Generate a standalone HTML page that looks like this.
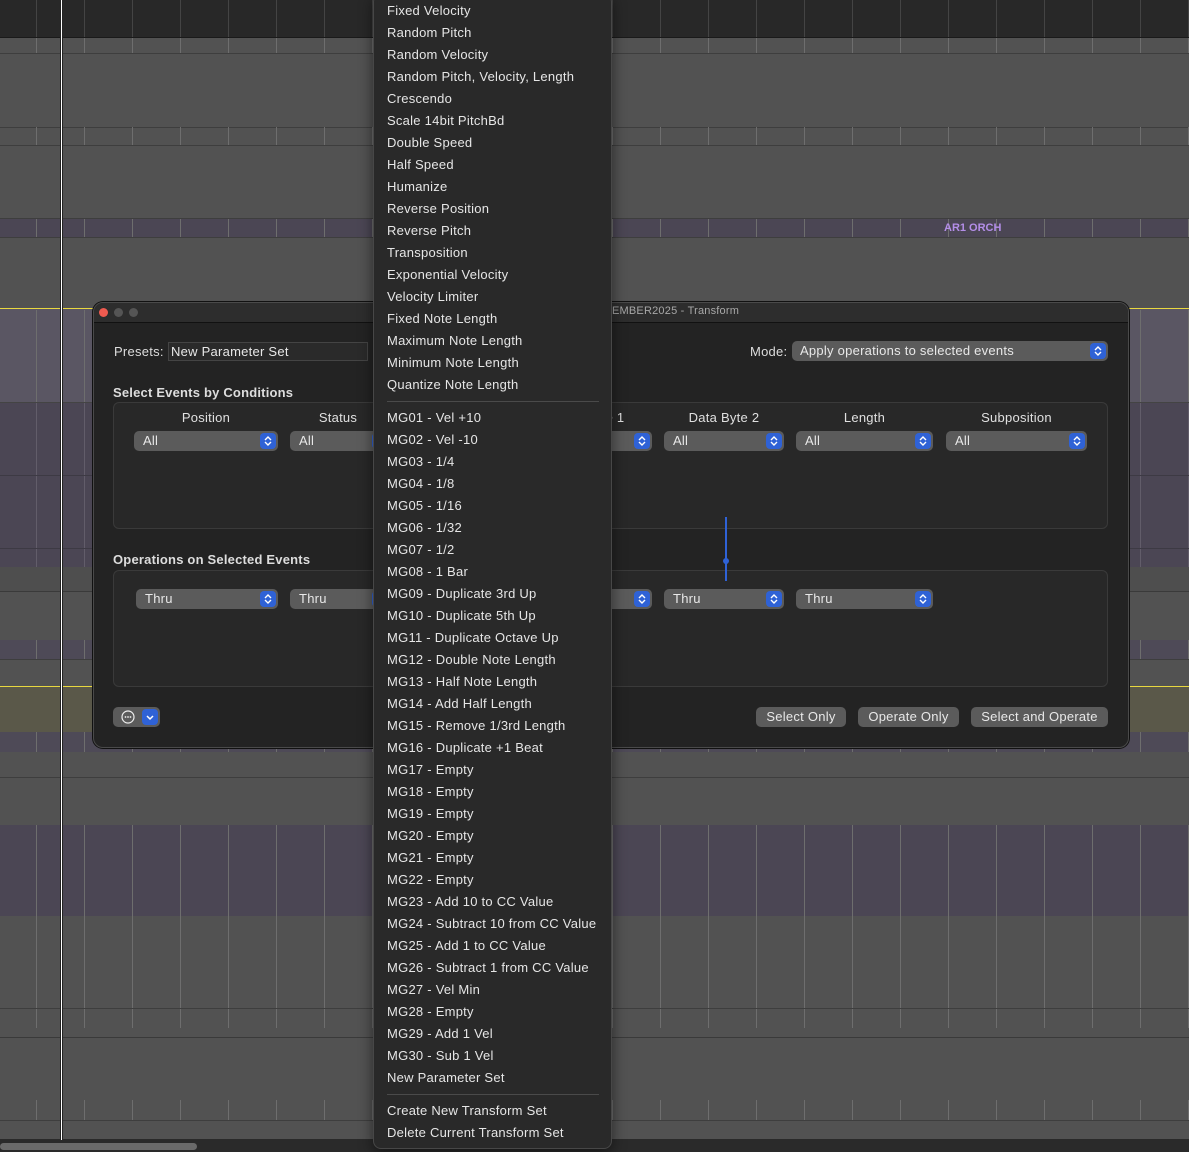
<!DOCTYPE html>
<html><head><meta charset="utf-8"><style>
*{margin:0;padding:0;box-sizing:border-box}
body{width:1189px;height:1152px;position:relative;overflow:hidden;background:#525252;font-family:"Liberation Sans",sans-serif;color:#ddd}
.a{position:absolute}
.band{position:absolute;left:0;width:1189px}
.hl{position:absolute;left:0;width:1189px;height:1px;background:#3e3e3e}
.ticks{position:absolute;left:0;width:1189px;background-image:repeating-linear-gradient(90deg,transparent 0,transparent 36px,#6e6e6e 36px,#6e6e6e 37px,transparent 37px,transparent 48px);background-size:48px 100%;background-position:0 0}
.pop{position:absolute;height:20px;background:#5b5b5b;border-radius:5px;font-size:13px;color:#e8e8e8;line-height:20px;padding-left:9px;letter-spacing:.25px}
.pop .st{position:absolute;right:2px;top:2px;width:16px;height:16px;background:#2f62d6;border-radius:4px}
.pop .st svg{position:absolute;left:3px;top:2px}
.lbl{position:absolute;font-size:13px;color:#e0e0e0;text-align:center;letter-spacing:.25px}
.grp{position:absolute;left:113px;width:995px;border:1px solid #3a3a3a;border-radius:6px;background:#282828}
.btn{position:absolute;top:707px;height:20px;background:#5b5b5b;border-radius:5px;font-size:13px;color:#e8e8e8;line-height:20px;text-align:center;letter-spacing:.25px}
.menu{position:absolute;left:373px;top:-6px;width:239px;height:1155px;background:#292929;border:1px solid #474747;border-radius:8px;box-shadow:0 4px 14px rgba(0,0,0,.5)}
.mi{position:absolute;left:13px;font-size:13px;color:#e6e6e6;white-space:nowrap;line-height:16px;letter-spacing:.25px}
.sep{position:absolute;left:13px;width:212px;height:1px;background:#4a4a4a}
</style></head><body>
<div class="band" style="top:0;height:37px;background:#282828"></div>
<div class="ticks" style="top:0;height:37px;background-image:repeating-linear-gradient(90deg,transparent 0,transparent 36px,#444 36px,#444 37px,transparent 37px,transparent 48px)"></div>
<div class="hl" style="top:37px;background:#1a1a1a"></div>
<div class="ticks" style="top:38px;height:15px"></div>
<div class="hl" style="top:53px"></div>
<div class="hl" style="top:127px"></div>
<div class="ticks" style="top:127px;height:18px"></div>
<div class="hl" style="top:145px"></div>
<div class="band" style="top:218px;height:19px;background:#4b4654"></div>
<div class="ticks" style="top:218px;height:19px"></div>
<div class="hl" style="top:218px"></div>
<div class="hl" style="top:237px"></div>
<div class="a" style="left:944px;top:222px;font-size:11px;font-weight:bold;color:#b48ee8">AR1 ORCH</div>
<div class="band" style="top:308px;height:94px;background:#5a5663"></div>
<div class="ticks" style="top:310px;height:92px"></div>
<div class="band" style="top:402px;height:165px;background:#4b4654"></div>
<div class="ticks" style="top:402px;height:165px;background-image:repeating-linear-gradient(90deg,transparent 0,transparent 36px,#625d6a 36px,#625d6a 37px,transparent 37px,transparent 48px)"></div>
<div class="hl" style="top:402px;background:#444"></div>
<div class="hl" style="top:475px;background:#3d3a44"></div>
<div class="hl" style="top:548px;background:#3d3a44"></div>
<div class="band" style="top:567px;height:24px;background:#4e4e4e"></div>
<div class="hl" style="top:591px;background:#3a3a3a"></div>
<div class="band" style="top:640px;height:19px;background:#4e4a57"></div>
<div class="ticks" style="top:640px;height:19px"></div>
<div class="hl" style="top:659px"></div>
<div class="band" style="top:686px;height:46px;background:#5a5849"></div>
<div class="band" style="top:686px;height:1px;background:#e8d840"></div>
<div class="band" style="top:308px;height:1px;background:#e8d840"></div>
<div class="band" style="top:732px;height:20px;background:#4e4a57"></div>
<div class="ticks" style="top:732px;height:20px"></div>
<div class="hl" style="top:777px"></div>
<div class="band" style="top:825px;height:91px;background:#4b4654"></div>
<div class="ticks" style="top:825px;height:203px"></div>
<div class="hl" style="top:1008px"></div>
<div class="hl" style="top:1037px;background:#3a3a3a"></div>
<div class="ticks" style="top:1100px;height:20px"></div>
<div class="hl" style="top:1120px"></div>
<div class="band" style="top:1139px;height:13px;background:#2a2a2a"></div>
<div class="a" style="left:0;top:1143px;width:197px;height:7px;border-radius:4px;background:#6a6a6a"></div>
<div class="a" style="left:60px;top:0;width:3px;height:1140px;background:#fff;border-left:1px solid #222;border-right:1px solid #222"></div>

<div class="a" style="left:93px;top:302px;width:1036px;height:446px;background:#232323;border:1px solid #4a4a4a;border-radius:10px;overflow:hidden;box-shadow:0 0 0 1px #111">
  <div class="a" style="left:0;top:0;width:1036px;height:20px;background:#2d2d2d;border-bottom:1px solid #111"></div>
  <div class="a" style="left:5px;top:5px;width:9px;height:9px;border-radius:50%;background:#ef5b50"></div>
  <div class="a" style="left:20px;top:5px;width:9px;height:9px;border-radius:50%;background:#555"></div>
  <div class="a" style="left:35px;top:5px;width:9px;height:9px;border-radius:50%;background:#555"></div>
  <div class="a" style="left:518px;top:2px;font-size:11px;color:#a8a8a8;letter-spacing:.2px">EMBER2025 - Transform</div>
</div>
<div class="a" style="left:114px;top:344px;font-size:13px;color:#ddd;letter-spacing:.25px">Presets:</div>
<div class="a" style="left:168px;top:342px;width:200px;height:19px;background:#2a2a2a;border:1px solid #444;font-size:13px;color:#e8e8e8;padding-left:2px;line-height:17px;letter-spacing:.25px">New Parameter Set</div>
<div class="a" style="left:750px;top:344px;font-size:13px;color:#ddd;letter-spacing:.25px">Mode:</div>
<div class="pop" style="left:792px;top:341px;width:316px;padding-left:8px">Apply operations to selected events<div class="st"><svg width="10" height="12"><path d="M2 5l3-3 3 3M2 7l3 3 3-3" stroke="#fff" stroke-width="1.4" fill="none"/></svg></div></div>

<div class="a" style="left:113px;top:385px;font-size:13px;font-weight:bold;color:#ddd;letter-spacing:.2px">Select Events by Conditions</div>
<div class="grp" style="top:402px;height:127px"></div>
<div class="lbl" style="left:134px;top:410px;width:144px">Position</div>
<div class="lbl" style="left:290px;top:410px;width:96px">Status</div>
<div class="lbl" style="left:600px;top:410px;width:30px">e 1</div>
<div class="lbl" style="left:664px;top:410px;width:120px">Data Byte 2</div>
<div class="lbl" style="left:796px;top:410px;width:137px">Length</div>
<div class="lbl" style="left:946px;top:410px;width:141px">Subposition</div>

<div class="a" style="left:113px;top:552px;font-size:13px;font-weight:bold;color:#ddd;letter-spacing:.2px">Operations on Selected Events</div>
<div class="grp" style="top:570px;height:117px"></div>

<div class="pop" style="left:134px;top:431px;width:144px">All<div class="st"><svg width="10" height="12"><path d="M2 5l3-3 3 3M2 7l3 3 3-3" stroke="#fff" stroke-width="1.4" fill="none"/></svg></div></div>
<div class="pop" style="left:290px;top:431px;width:100px">All<div class="st"></div></div>
<div class="pop" style="left:600px;top:431px;width:52px"><div class="st"><svg width="10" height="12"><path d="M2 5l3-3 3 3M2 7l3 3 3-3" stroke="#fff" stroke-width="1.4" fill="none"/></svg></div></div>
<div class="pop" style="left:664px;top:431px;width:120px">All<div class="st"><svg width="10" height="12"><path d="M2 5l3-3 3 3M2 7l3 3 3-3" stroke="#fff" stroke-width="1.4" fill="none"/></svg></div></div>
<div class="pop" style="left:796px;top:431px;width:137px">All<div class="st"><svg width="10" height="12"><path d="M2 5l3-3 3 3M2 7l3 3 3-3" stroke="#fff" stroke-width="1.4" fill="none"/></svg></div></div>
<div class="pop" style="left:946px;top:431px;width:141px">All<div class="st"><svg width="10" height="12"><path d="M2 5l3-3 3 3M2 7l3 3 3-3" stroke="#fff" stroke-width="1.4" fill="none"/></svg></div></div>

<div class="pop" style="left:136px;top:589px;width:142px">Thru<div class="st"><svg width="10" height="12"><path d="M2 5l3-3 3 3M2 7l3 3 3-3" stroke="#fff" stroke-width="1.4" fill="none"/></svg></div></div>
<div class="pop" style="left:290px;top:589px;width:100px">Thru<div class="st"></div></div>
<div class="pop" style="left:600px;top:589px;width:52px"><div class="st"><svg width="10" height="12"><path d="M2 5l3-3 3 3M2 7l3 3 3-3" stroke="#fff" stroke-width="1.4" fill="none"/></svg></div></div>
<div class="pop" style="left:664px;top:589px;width:120px">Thru<div class="st"><svg width="10" height="12"><path d="M2 5l3-3 3 3M2 7l3 3 3-3" stroke="#fff" stroke-width="1.4" fill="none"/></svg></div></div>
<div class="pop" style="left:796px;top:589px;width:137px">Thru<div class="st"><svg width="10" height="12"><path d="M2 5l3-3 3 3M2 7l3 3 3-3" stroke="#fff" stroke-width="1.4" fill="none"/></svg></div></div>

<div class="a" style="left:725px;top:517px;width:2px;height:64px;background:#2f62d6"></div>
<div class="a" style="left:723px;top:558px;width:6px;height:6px;border-radius:50%;background:#2f62d6"></div>

<div class="a" style="left:113px;top:707px;width:47px;height:20px;background:#5b5b5b;border-radius:5px"></div>
<svg class="a" style="left:120px;top:709px" width="16" height="16"><circle cx="8" cy="8" r="6" stroke="#eee" stroke-width="1.2" fill="none"/><circle cx="5.5" cy="8" r=".9" fill="#eee"/><circle cx="8" cy="8" r=".9" fill="#eee"/><circle cx="10.5" cy="8" r=".9" fill="#eee"/></svg>
<div class="a" style="left:142px;top:709px;width:16px;height:16px;background:#2f62d6;border-radius:4px"><svg width="16" height="16"><path d="M5 7l3 3 3-3" stroke="#fff" stroke-width="1.5" fill="none"/></svg></div>

<div class="btn" style="left:756px;width:90px">Select Only</div>
<div class="btn" style="left:858px;width:101px">Operate Only</div>
<div class="btn" style="left:971px;width:137px">Select and Operate</div>

<div class="menu">
<div class="mi" style="top:8px">Fixed Velocity</div>
<div class="mi" style="top:30px">Random Pitch</div>
<div class="mi" style="top:52px">Random Velocity</div>
<div class="mi" style="top:74px">Random Pitch, Velocity, Length</div>
<div class="mi" style="top:96px">Crescendo</div>
<div class="mi" style="top:118px">Scale 14bit PitchBd</div>
<div class="mi" style="top:140px">Double Speed</div>
<div class="mi" style="top:162px">Half Speed</div>
<div class="mi" style="top:184px">Humanize</div>
<div class="mi" style="top:206px">Reverse Position</div>
<div class="mi" style="top:228px">Reverse Pitch</div>
<div class="mi" style="top:250px">Transposition</div>
<div class="mi" style="top:272px">Exponential Velocity</div>
<div class="mi" style="top:294px">Velocity Limiter</div>
<div class="mi" style="top:316px">Fixed Note Length</div>
<div class="mi" style="top:338px">Maximum Note Length</div>
<div class="mi" style="top:360px">Minimum Note Length</div>
<div class="mi" style="top:382px">Quantize Note Length</div>
<div class="sep" style="top:406px"></div>
<div class="mi" style="top:415px">MG01 - Vel +10</div>
<div class="mi" style="top:437px">MG02 - Vel -10</div>
<div class="mi" style="top:459px">MG03 - 1/4</div>
<div class="mi" style="top:481px">MG04 - 1/8</div>
<div class="mi" style="top:503px">MG05 - 1/16</div>
<div class="mi" style="top:525px">MG06 - 1/32</div>
<div class="mi" style="top:547px">MG07 - 1/2</div>
<div class="mi" style="top:569px">MG08 - 1 Bar</div>
<div class="mi" style="top:591px">MG09 - Duplicate 3rd Up</div>
<div class="mi" style="top:613px">MG10 - Duplicate 5th Up</div>
<div class="mi" style="top:635px">MG11 - Duplicate Octave Up</div>
<div class="mi" style="top:657px">MG12 - Double Note Length</div>
<div class="mi" style="top:679px">MG13 - Half Note Length</div>
<div class="mi" style="top:701px">MG14 - Add Half Length</div>
<div class="mi" style="top:723px">MG15 - Remove 1/3rd Length</div>
<div class="mi" style="top:745px">MG16 - Duplicate +1 Beat</div>
<div class="mi" style="top:767px">MG17 - Empty</div>
<div class="mi" style="top:789px">MG18 - Empty</div>
<div class="mi" style="top:811px">MG19 - Empty</div>
<div class="mi" style="top:833px">MG20 - Empty</div>
<div class="mi" style="top:855px">MG21 - Empty</div>
<div class="mi" style="top:877px">MG22 - Empty</div>
<div class="mi" style="top:899px">MG23 - Add 10 to CC Value</div>
<div class="mi" style="top:921px">MG24 - Subtract 10 from CC Value</div>
<div class="mi" style="top:943px">MG25 - Add 1 to CC Value</div>
<div class="mi" style="top:965px">MG26 - Subtract 1 from CC Value</div>
<div class="mi" style="top:987px">MG27 - Vel Min</div>
<div class="mi" style="top:1009px">MG28 - Empty</div>
<div class="mi" style="top:1031px">MG29 - Add 1 Vel</div>
<div class="mi" style="top:1053px">MG30 - Sub 1 Vel</div>
<div class="mi" style="top:1075px">New Parameter Set</div>
<div class="sep" style="top:1099px"></div>
<div class="mi" style="top:1108px">Create New Transform Set</div>
<div class="mi" style="top:1130px">Delete Current Transform Set</div>
</div>
</body></html>
